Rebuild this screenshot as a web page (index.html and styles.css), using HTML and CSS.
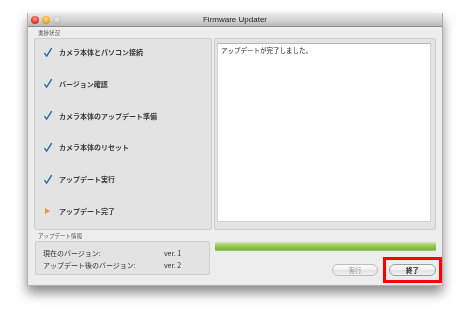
FILE: index.html
```html
<!DOCTYPE html>
<html lang="ja">
<head>
  <meta charset="UTF-8" />
  <title>Firmware Updater</title>
  <link rel="stylesheet" href="styles.css">
</head>
<body>
  <div class="window">
    <div class="titlebar">
      <div class="lights">
        <span class="light red"></span>
        <span class="light yellow"></span>
        <span class="light off"></span>
      </div>
      <div class="title">Firmware Updater</div>
    </div>

    <div class="content">
      <div class="label">進捗状況</div>
      <div class="main">
        <ul class="steps">
          <li><svg class="check" viewBox="0 0 8 9"><path d="M0.8 5.6 L2.6 8.2 L7.4 0.6" /></svg>カメラ本体とパソコン接続</li>
          <li><svg class="check" viewBox="0 0 8 9"><path d="M0.8 5.6 L2.6 8.2 L7.4 0.6" /></svg>バージョン確認</li>
          <li><svg class="check" viewBox="0 0 8 9"><path d="M0.8 5.6 L2.6 8.2 L7.4 0.6" /></svg>カメラ本体のアップデート準備</li>
          <li><svg class="check" viewBox="0 0 8 9"><path d="M0.8 5.6 L2.6 8.2 L7.4 0.6" /></svg>カメラ本体のリセット</li>
          <li><svg class="check" viewBox="0 0 8 9"><path d="M0.8 5.6 L2.6 8.2 L7.4 0.6" /></svg>アップデート実行</li>
          <li><span class="arrow"></span>アップデート完了</li>
        </ul>
        <div class="log">
          <div class="log-text">アップデートが完了しました。</div>
        </div>
      </div>

      <div class="bottom">
        <div class="info-col">
          <div class="label">アップデート情報</div>
          <div class="info">
            <span>現在のバージョン:</span><span>ver. 1</span>
            <span>アップデート後のバージョン:</span><span>ver. 2</span>
          </div>
        </div>
        <div class="action-col">
          <div class="progress"></div>
          <div class="buttons">
            <button class="btn" disabled>実行</button>
            <div class="highlight">
              <button class="btn quit">終了</button>
            </div>
          </div>
        </div>
      </div>
    </div>
  </div>
</body>
</html>
```

FILE: styles.css
```css
* { box-sizing: border-box; }
body {
  margin: 0;
  padding: 13px 0 30px 27px;
  background: white;
  font-family: "Noto Sans CJK JP", "Liberation Sans", sans-serif;
  color: #222;
}

.window {
  width: 416px;
  height: 273px;
  background: #ededed;
  border: 1px solid #b0b0b0;
  border-top: none;
  filter: drop-shadow(0 7px 6px rgba(0, 0, 0, 0.45));
}

.titlebar {
  height: 14px;
  display: flex;
  align-items: center;
  position: relative;
  background: linear-gradient(#ebebeb, #d6d6d6 50%, #b8b8b8);
  border-bottom: 1px solid #8c8c8c;
  border-radius: 3px 3px 0 0;
}

.lights {
  display: flex;
  gap: 3px;
  padding-left: 3px;
}

.light {
  width: 8px;
  height: 8px;
  border-radius: 50%;
}
.light.red { background: radial-gradient(circle at 50% 35%, #ff9a8c, #e0392c 60%, #a8231a); }
.light.yellow { background: radial-gradient(circle at 50% 35%, #ffe08a, #f4a622 60%, #c27a10); }
.light.off { background: radial-gradient(circle at 50% 35%, #eeeeee, #c6c6c6 60%, #a0a0a0); }

.title {
  position: absolute;
  left: 0; right: 0;
  text-align: center;
  font-family: "Liberation Sans", sans-serif;
  font-size: 8px;
  color: #222;
  pointer-events: none;
}

.content {
  padding: 0 6px 0 6px;
}

.label {
  height: 11px;
  padding: 2px 0 0 4px;
  font-size: 5.5px;
  line-height: 8px;
  color: #555;
}

.main {
  display: grid;
  grid-template-columns: 178px 222px;
  gap: 2px;
  height: 192px;
}

.steps {
  list-style: none;
  margin: 0;
  padding: 7px 0 0 9px;
  background: #e3e3e3;
  border: 1px solid #cdcdcd;
  border-radius: 2px;
  display: flex;
  flex-direction: column;
  gap: 19.8px;
}

.steps li {
  height: 12px;
  display: flex;
  align-items: center;
  font-size: 7px;
  font-weight: bold;
  color: #3a3a3a;
}

.check {
  width: 8px;
  height: 9px;
  margin-right: 7px;
  fill: none;
  stroke: #1f6aa6;
  stroke-width: 1.4;
  stroke-linecap: round;
  stroke-linejoin: round;
}

.arrow {
  width: 0;
  height: 0;
  margin: 0 9px 0 1px;
  border-left: 5px solid #f09a24;
  border-top: 3px solid transparent;
  border-bottom: 3px solid transparent;
}

.log {
  background: #e3e3e3;
  border: 1px solid #cdcdcd;
  border-radius: 2px;
  padding: 4px 4px 7px 2px;
}

.log-text {
  height: 100%;
  background: white;
  border: 1px solid #d4d4d4;
  border-top-color: #b8b8b8;
  padding: 1px 3px;
  font-size: 6.5px;
  color: #222;
}

.bottom {
  display: grid;
  grid-template-columns: 178px 222px;
  gap: 2px;
}

.info {
  margin: 0 2px 0 1px;
  height: 34px;
  background: #e3e3e3;
  border: 1px solid #cdcdcd;
  border-radius: 2px;
  padding: 5px 0 0 7px;
  display: grid;
  grid-template-columns: 121px auto;
  grid-auto-rows: 12px;
  align-items: center;
  font-size: 7px;
  color: #333;
}

.progress {
  margin-top: 12px;
  height: 9px;
  margin-left: 1px;
  background: linear-gradient(#d2e8ae, #a9d26a 30%, #8cc049 60%, #7fb23d 80%, #a4cc6c);
  border-radius: 1px;
}

.buttons {
  display: flex;
  justify-content: flex-end;
  align-items: center;
  margin-top: 6px;
  margin-right: -6px;
  gap: 5px;
}

.btn {
  display: block;
  width: 46px;
  height: 12px;
  padding: 0;
  border: 1px solid #9c9c9c;
  border-radius: 6px;
  background: linear-gradient(#ffffff, #f0f0f0 50%, #e2e2e2 55%, #f3f3f3);
  font-family: inherit;
  font-size: 6.5px;
  line-height: 10px;
  color: #222;
}

.btn[disabled] {
  color: #9a9a9a;
  border-color: #bcbcbc;
}

.btn.quit {
  width: 47px;
  font-weight: bold;
}

.highlight {
  display: flex;
  border: 3px solid #ff0000;
  padding: 4px 3px;
}
```
